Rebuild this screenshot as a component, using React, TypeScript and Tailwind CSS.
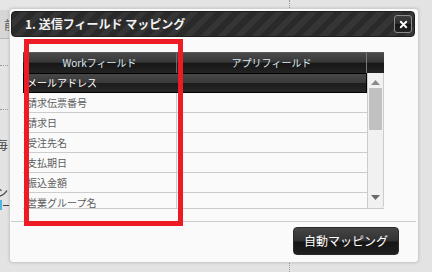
import { X } from "lucide-react"

const rows = ["請求伝票番号", "請求日", "受注先名", "支払期日", "振込金額", "営業グループ名"]

function ScrollArrow({ up }: { up?: boolean }) {
  return (
    <svg width="9" height="5" viewBox="0 0 9 5" className="block">
      {up ? <polygon points="0,5 9,5 4.5,0" fill="#8a8a8a" /> : <polygon points="0,0 9,0 4.5,5" fill="#6a6a6a" />}
    </svg>
  )
}

function BackgroundPage() {
  return (
    <div className="flex h-full">
      <div className="w-[40px] flex flex-col text-[#444] text-[12px]">
        <div className="h-[10px] bg-[#e6e6e6]" />
        <div className="h-[29px] bg-[#d6d6d6] border-b border-[#b8b8b8] pl-[4px] leading-[29px] text-[#555]">前</div>
        <div className="h-[27px] border-b border-dotted border-[#999]" />
        <div className="h-[44px] border-b border-dotted border-[#999]" />
        <div className="h-[28px]" />
        <div className="leading-[14px] -ml-[4px]">毎</div>
        <div className="h-[33px]" />
        <div className="leading-[14px] -ml-[4px]">ン</div>
        <div className="flex items-center h-[10px] mt-[1px]">
          <div className="w-[2px] h-[10px] bg-[#52b6e0]" />
          <div className="w-[6px] h-[1px] bg-[#444] ml-[1px]" />
        </div>
      </div>
      <div className="w-[249px]" />
      <div className="h-full border-l border-dotted border-[#9a9a9a]" />
    </div>
  )
}

export default function App() {
  return (
    <div className="relative w-[432px] h-[272px] overflow-hidden bg-[#e3e3e3] font-['Noto_Sans_CJK_JP','Noto_Sans',sans-serif]">
      <BackgroundPage />

      <div className="absolute left-[9px] top-[8px] w-[410px] h-[255px] bg-[#fafafa] border border-[#cfcfcf] rounded-[4px] shadow-[0_0_3px_rgba(0,0,0,0.15)] flex flex-col">
        <div className="mt-[2px] ml-[1px] mr-[3px] h-[26px] rounded-[4px] border border-[#1e1e1e] bg-[repeating-linear-gradient(135deg,#2a2a2a_0px,#2a2a2a_6px,#353535_6px,#353535_12px)] flex items-center justify-between pl-[13px] pr-[2px]">
          <span className="text-[12px] font-bold text-[#f2f2f2] leading-none">1. 送信フィールド マッピング</span>
          <button className="w-[18px] h-[18px] rounded-[3px] border border-[#8a8a8a] bg-[linear-gradient(to_bottom,#3e3e3e_0%,#2c2c2c_50%,#151515_51%,#222_100%)] flex items-center justify-center">
            <X size={11} strokeWidth={4} color="#ffffff" />
          </button>
        </div>

        <div className="ml-[13px] mt-[15px] w-[361px] flex flex-col">
          <div className="flex h-[21px] bg-[linear-gradient(to_bottom,#4a4a4a_0%,#383838_45%,#171717_52%,#232323_100%)] border-t border-[#5a5a5a] text-[10px] text-[#dde8f2] leading-[20px]">
            <div className="w-[154px] text-center border-r border-[#6a6a6a]">Workフィールド</div>
            <div className="w-[190px] text-center border-r border-[#7a7a7a]">アプリフィールド</div>
            <div className="w-[17px]" />
          </div>
          <div className="flex h-[136px] border-b border-[#cccccc]">
            <div className="w-[344px] h-full overflow-hidden flex flex-col text-[10px]">
              <div className="shrink-0 flex h-[20px] border border-black bg-[linear-gradient(to_bottom,#484848_0%,#3a3a3a_48%,#1c1c1c_52%,#262626_100%)] text-white leading-[18px]">
                <div className="w-[153px] pl-[3px]">メールアドレス</div>
                <div className="flex-1" />
              </div>
              {rows.map((r) => (
                <div key={r} className="shrink-0 flex h-[20px] border-b border-[#cccccc] text-[#5c5c5c] leading-[19px]">
                  <div className="w-[154px] pl-[4px] border-r border-[#cccccc]">{r}</div>
                  <div className="flex-1" />
                </div>
              ))}
            </div>
            <div className="w-[17px] h-full bg-[#f1f1f1] border-l border-r border-[#cccccc] rounded-br-[3px] flex flex-col items-center pt-[7px]">
              <ScrollArrow up />
              <div className="mt-[3px] w-[13px] h-[42px] bg-[#c1c1c1]" />
              <div className="flex-1" />
              <div className="mb-[8px]">
                <ScrollArrow />
              </div>
            </div>
          </div>
        </div>

        <div className="mt-[12px] ml-[1px] mr-[2px] border-t border-[#cccccc]" />

        <div className="flex justify-end mr-[19px] mt-[5px]">
          <button className="w-[106px] h-[28px] rounded-[4px] border border-[#2a2a2a] bg-[linear-gradient(to_bottom,#454545_0%,#333_48%,#151515_55%,#202020_100%)] text-[12px] text-white leading-none">
            自動マッピング
          </button>
        </div>
      </div>

      <div className="absolute left-[24px] top-[39px] w-[159px] h-[187px] border-[5px] border-[#ed1c24]" />
    </div>
  )
}
